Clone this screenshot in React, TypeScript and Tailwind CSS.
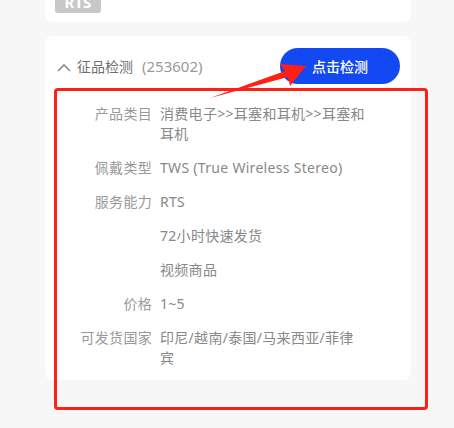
import React from "react";

const rows: { label: string; value: string }[] = [
  { label: "产品类目", value: "消费电子>>耳塞和耳机>>耳塞和耳机" },
  { label: "佩戴类型", value: "TWS (True Wireless Stereo)" },
  { label: "服务能力", value: "RTS" },
  { label: "", value: "72小时快速发货" },
  { label: "", value: "视频商品" },
  { label: "价格", value: "1~5" },
  { label: "可发货国家", value: "印尼/越南/泰国/马来西亚/菲律宾" },
];

export default function App() {
  return (
    <div
      className="relative w-[454px] h-[428px] overflow-hidden bg-[#f7f7f7] pl-[45px]"
      style={{ fontFamily: '"Noto Sans", "Noto Sans CJK SC", sans-serif' }}
    >
      {/* previous card, cut at top */}
      <div className="w-[366px] h-[22px] overflow-hidden bg-white rounded-b-lg flex items-end pb-[9px] pl-[10px]">
        <div className="h-[22px] w-[46px] text-center rounded-[3px] bg-[#c8c8c8] text-white text-[15px] font-bold leading-[22px]">
          RTS
        </div>
      </div>

      {/* detection card */}
      <div className="mt-[14px] w-[366px] bg-white rounded-lg pt-[12px] pb-[12px]">
        <div className="flex items-center justify-between pl-[12px] pr-[11px]">
          <div className="flex items-center">
            <svg width="14" height="9" viewBox="0 0 14 9" className="mr-[6px] mt-[2px]">
              <polyline points="1,8 7,2 13,8" fill="none" stroke="#8c8c8c" strokeWidth="1.6" />
            </svg>
            <span className="text-[14px] text-[#6f6f6f]">征品检测</span>
            <span className="ml-[9px] text-[15px] text-[#999]">(253602)</span>
          </div>
          <button className="w-[120px] h-[36px] rounded-full bg-[#1249f2] text-white text-[14px] font-medium">
            点击检测
          </button>
        </div>

        <div className="mt-[20px] flex flex-col gap-[14px]">
          {rows.map((r, i) => (
            <div key={i} className="flex text-[14px] leading-[20px] tracking-[0.3px]">
              <div className="w-[107px] shrink-0 text-right text-[#999]">{r.label}</div>
              <div className="ml-[8px] w-[206px] text-[#888] break-all">{r.value}</div>
            </div>
          ))}
        </div>
      </div>

      {/* annotation: red frame */}
      <div className="absolute left-[54px] top-[88px] w-[374px] h-[322px] border-[3px] border-[#ff1f14] rounded-[4px]" />

      {/* annotation: arrow */}
      <svg className="absolute left-0 top-0" width="454" height="428" viewBox="0 0 454 428">
        <polygon points="210,98 285,71 280,64 306,66 290,86 288,77" fill="#ff1f14" />
      </svg>
    </div>
  );
}
